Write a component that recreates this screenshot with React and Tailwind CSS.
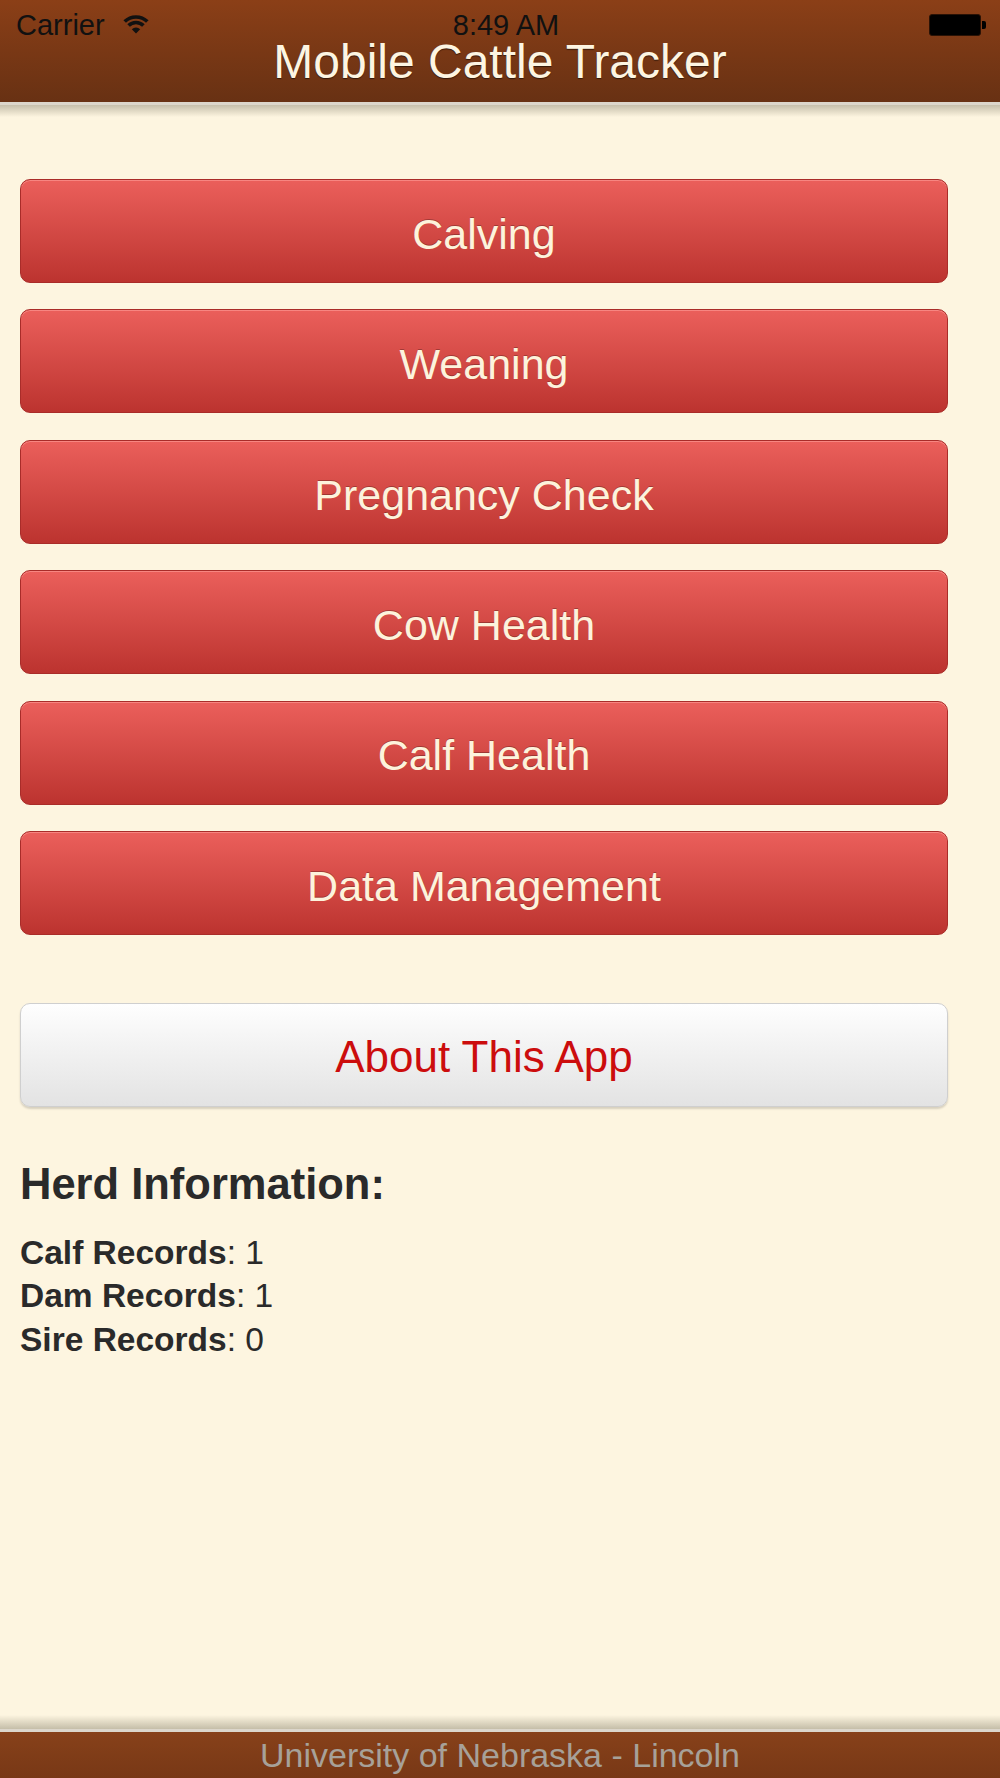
import React from 'react'

const menuItems = ['Calving', 'Weaning', 'Pregnancy Check', 'Cow Health', 'Calf Health', 'Data Management']

const records = [
  { label: 'Calf Records', value: 1 },
  { label: 'Dam Records', value: 1 },
  { label: 'Sire Records', value: 0 },
]

function WifiIcon() {
  return (
    <svg width="26" height="21" viewBox="0 0 26 21" className="block">
      <path d="M1.7 8.6 A16 16 0 0 1 24.3 8.6" fill="none" stroke="#111" strokeWidth="3.6" />
      <path d="M5.6 12.6 A10.4 10.4 0 0 1 20.4 12.6" fill="none" stroke="#111" strokeWidth="3.6" />
      <path d="M13 20.5 L8.8 16.3 A6 6 0 0 1 17.2 16.3 Z" fill="#111" />
    </svg>
  )
}

function BatteryIcon() {
  return (
    <div className="flex items-center">
      <div className="w-[52px] h-[22px] rounded-[3px] bg-black border border-[#2a1205]" />
      <div className="w-[4px] h-[8px] ml-[1px] rounded-r-[2px] bg-black" />
    </div>
  )
}

export default function App() {
  return (
    <div className="min-h-[1778px] w-full flex flex-col bg-[#fdf5e0] font-['Liberation_Sans',Arial,sans-serif]">
      {/* header */}
      <div className="h-[102px] bg-linear-to-b from-[#8b3f17] to-[#683113] pt-[6px]">
        <div className="h-[38px] grid grid-cols-3 items-center pl-[16px] pr-[14px]">
          <div className="flex items-center">
            <span className="text-[29px] text-[#111] leading-none">Carrier</span>
            <span className="ml-[18px] -mt-[3px]"><WifiIcon /></span>
          </div>
          <div className="text-center text-[29px] text-[#111] leading-none pl-[10px]">8:49 AM</div>
          <div className="flex justify-end"><BatteryIcon /></div>
        </div>
        <h1 className="text-center text-[48px] leading-[36px] text-[#fdf5e2] [text-shadow:0_1px_1px_rgba(0,0,0,0.55)]">
          Mobile Cattle Tracker
        </h1>
      </div>
      <div className="h-[3px] bg-[#dcd6cb]" />
      <div className="h-[12px] bg-linear-to-b from-[#c6bfab] to-[#fdf5e0]" />

      {/* main menu */}
      <div className="flex-1 pl-[20px] pr-[52px] pt-[62px]">
        <div className="flex flex-col gap-[26.4px]">
          {menuItems.map((item) => (
            <button
              key={item}
              className="h-[104px] w-full pt-[6px] rounded-[10px] border border-[#a92c29] bg-linear-to-b from-[#eb5f5b] to-[#bc332f] shadow-[inset_0_1px_0_rgba(255,160,155,0.6)] text-[43px] text-[#fdf3dc] [text-shadow:0_-1px_0_rgba(0,0,0,0.25)]"
            >
              {item}
            </button>
          ))}
        </div>

        <button className="mt-[68px] h-[104px] w-full pt-[4px] rounded-[10px] border border-[#cfcfcf] bg-linear-to-b from-[#fefefe] to-[#e3e3e3] shadow-[0_2px_2px_rgba(0,0,0,0.15)] text-[44px] text-[#cc0d0d]">
          About This App
        </button>

        <h2 className="mt-[53px] text-[43.5px] leading-[48px] font-bold text-[#2a2a2a]">Herd Information:</h2>
        <div className="mt-[23px] text-[33.5px] leading-[43.5px] text-[#2a2a2a]">
          {records.map((r) => (
            <div key={r.label}>
              <span className="font-bold">{r.label}</span>: {r.value}
            </div>
          ))}
        </div>
      </div>

      {/* footer */}
      <div className="h-[14px] bg-linear-to-b from-[#fdf5e0] to-[#c5bea9]" />
      <div className="h-[3px] bg-[#dcd6cb]" />
      <div className="h-[46px] bg-linear-to-b from-[#87411a] to-[#783816] flex items-center justify-center">
        <span className="text-[34px] leading-none text-[#a7a199]">University of Nebraska - Lincoln</span>
      </div>
    </div>
  )
}
